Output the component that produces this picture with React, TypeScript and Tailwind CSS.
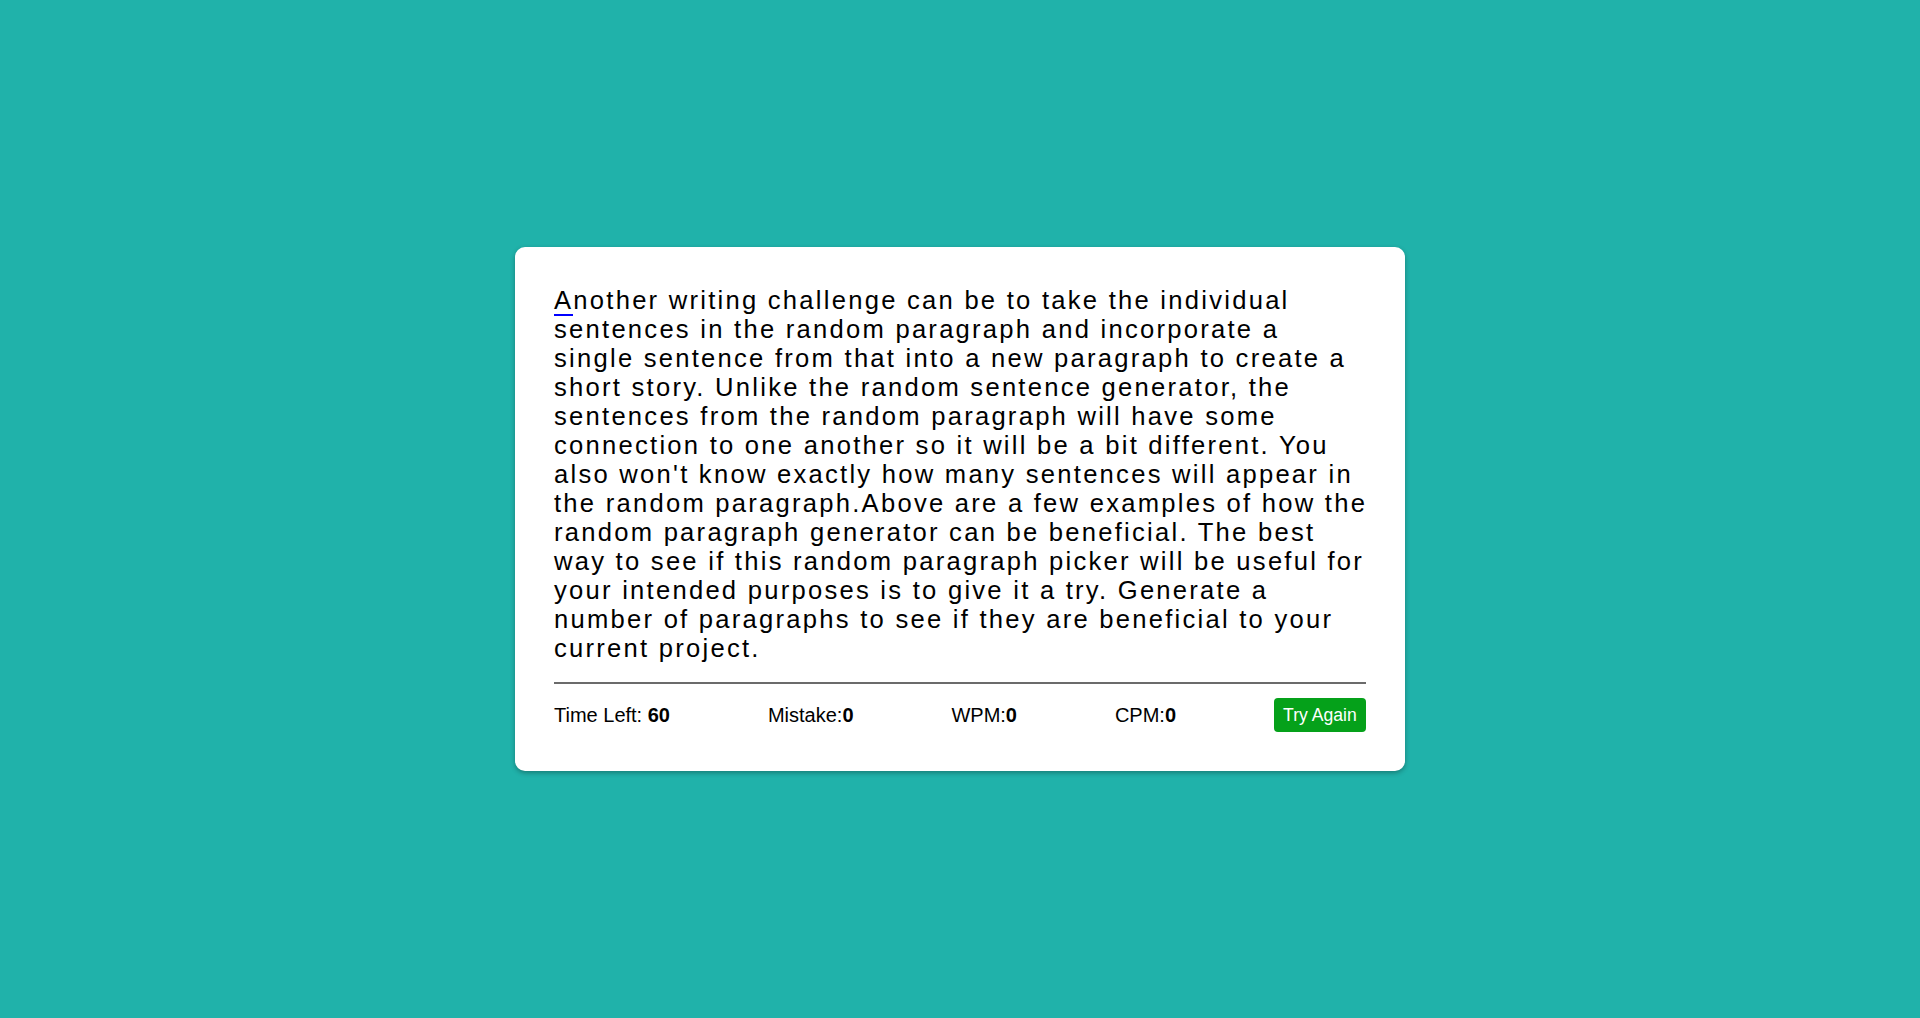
const lines = [
  'Another writing challenge can be to take the individual',
  'sentences in the random paragraph and incorporate a',
  'single sentence from that into a new paragraph to create a',
  'short story. Unlike the random sentence generator, the',
  'sentences from the random paragraph will have some',
  'connection to one another so it will be a bit different. You',
  "also won't know exactly how many sentences will appear in",
  'the random paragraph.Above are a few examples of how the',
  'random paragraph generator can be beneficial. The best',
  'way to see if this random paragraph picker will be useful for',
  'your intended purposes is to give it a try. Generate a',
  'number of paragraphs to see if they are beneficial to your',
  'current project.',
]

const stats = [
  { label: 'Time Left: ', value: '60' },
  { label: 'Mistake:', value: '0' },
  { label: 'WPM:', value: '0' },
  { label: 'CPM:', value: '0' },
]

export default function App() {
  return (
    <div className="min-h-screen w-full bg-[#20b2aa] flex items-center justify-center font-['Liberation_Sans',Arial,sans-serif]">
      <div className="w-[890px] bg-white rounded-[10px] p-[39px] shadow-[0_2px_5px_rgba(0,0,0,0.3)]">
        <p className="text-[25.6px] leading-[29px] tracking-[2.25px] text-black">
          {lines.map((line, li) => (
            <span key={li} className="block whitespace-nowrap">
              {li === 0 ? (
                <>
                  <span className="border-b-[2px] border-[#0000ff]">A</span>
                  {line.slice(1)}
                </>
              ) : (
                line
              )}
            </span>
          ))}
        </p>
        <div className="mt-[19px] h-[2px] bg-[#6b6b6b]" />
        <div className="mt-[14px] flex items-center justify-between text-[20px] text-black">
          {stats.map((s) => (
            <span key={s.label}>
              {s.label}
              <b>{s.value}</b>
            </span>
          ))}
          <button className="w-[92px] h-[34px] rounded-[4px] bg-[#05a11a] text-white text-[17.6px] flex items-center justify-center">
            Try Again
          </button>
        </div>
      </div>
    </div>
  )
}
